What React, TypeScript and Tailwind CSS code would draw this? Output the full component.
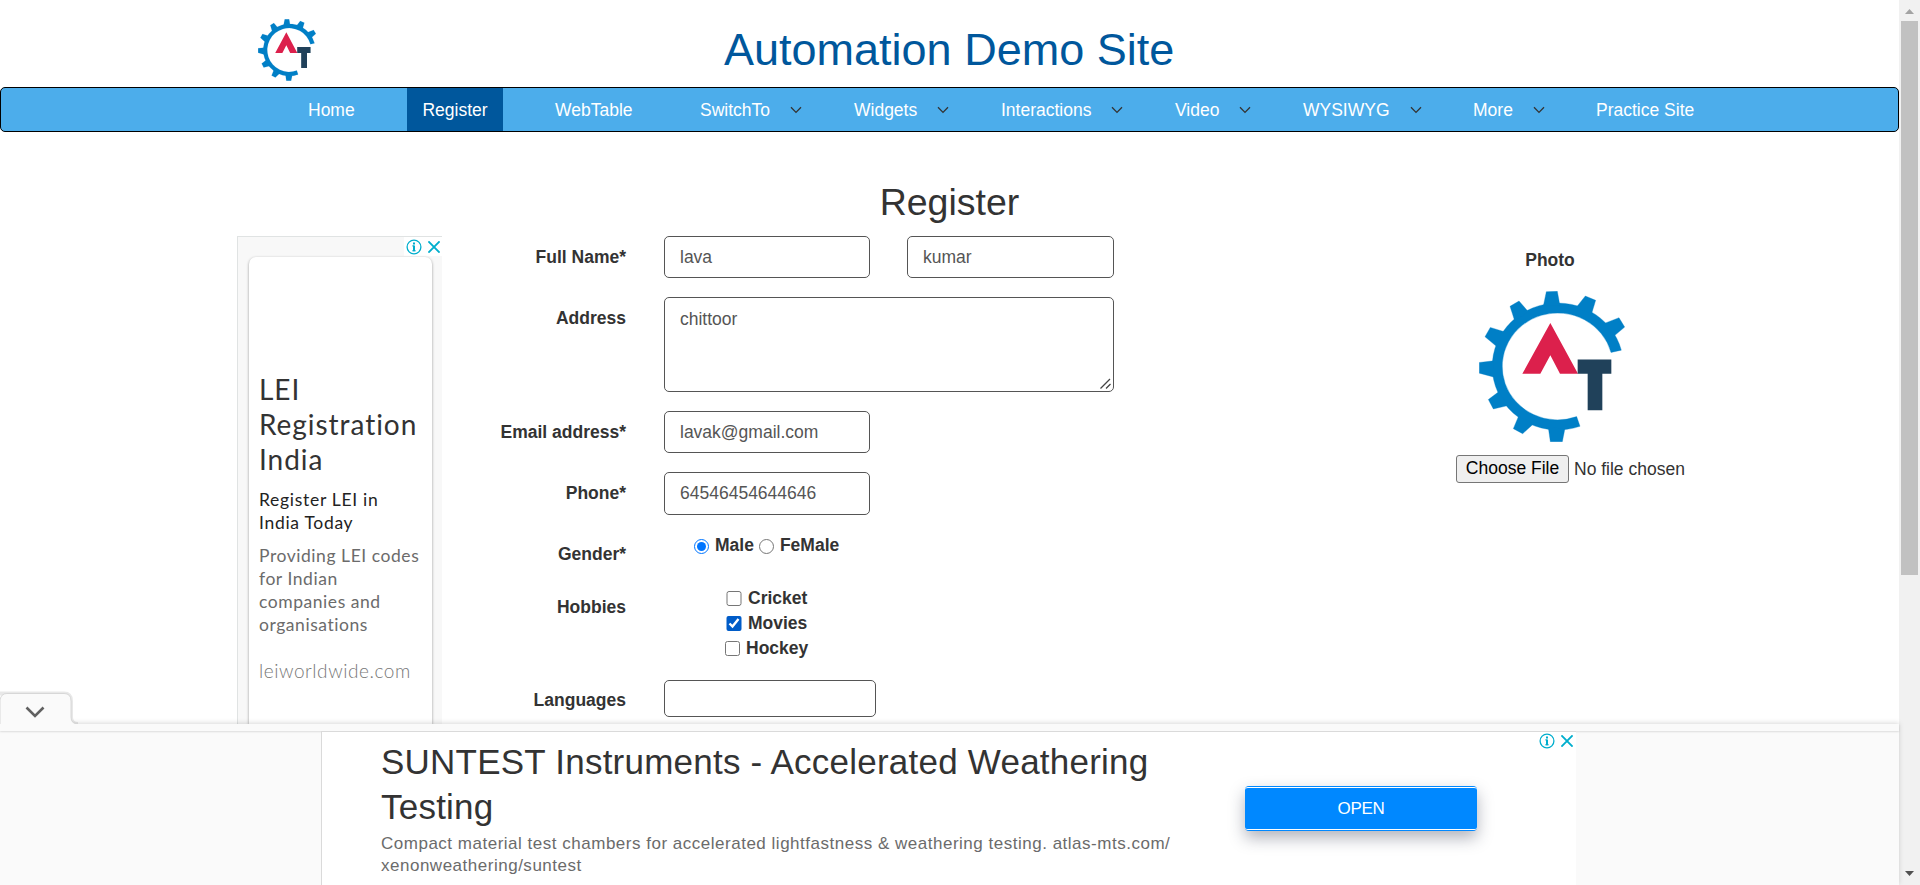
import type { ReactNode } from "react";

function Logo({ className }: { className: string }) {
  return (
    <svg className={className} viewBox="118 185 438 452" preserveAspectRatio="none">
      <g fill="#007fc6" stroke="#007fc6" strokeWidth="1">
        <path d="M545 362A197 190 0 1 0 421 590L411 561A166 160 0 1 1 514 369Z" />
        <path d="M311 230L320 187L353 186L361 230Z" />
        <path d="M409 235L437 200L468 213L456 252Z" />
        <path d="M494 282L538 265L555 293L523 320Z" />
        <path d="M266 247L238 215L211 231L225 274Z" />
        <path d="M194 307L152 294L136 322L172 352Z" />
        <path d="M162 394L119 399L119 431L164 443Z" />
        <path d="M178 486L146 510L161 538L205 528Z" />
        <path d="M237 559L221 597L249 612L281 583Z" />
        <path d="M326 594L332 636L368 636L376 596Z" />
      </g>
      <path d="M332 281L415 433H361L332 377L302 433H248Z" fill="#dc204c" />
      <path d="M414 390H515V433H488V542H444V433H414Z" fill="#20415a" />
    </svg>
  );
}

function AdInfoIcon() {
  return (
    <svg className="h-[16px] w-[16px]" viewBox="0 0 16 16" fill="none" stroke="#00aecd">
      <circle cx="8" cy="8" r="6.9" strokeWidth="1.3" />
      <path d="M8 3.4V5.4M8 6.4V12.2" strokeWidth="2" />
      <path d="M6.2 6.9H8M6.2 11.8H9.8" strokeWidth="0.9" />
    </svg>
  );
}

function AdCloseIcon() {
  return (
    <svg className="h-[12px] w-[12px]" viewBox="0 0 12 12" fill="none" stroke="#00aecd" strokeWidth="1.9">
      <path d="M0.4 0.4L11.6 11.6M11.6 0.4L0.4 11.6" />
    </svg>
  );
}

function NavItem({ label, width, menu }: { label: string; width: string; menu?: boolean }) {
  return (
    <a className={"flex shrink-0 items-center pt-px text-white " + width}>
      <span className="whitespace-nowrap">{label}</span>
      {menu && (
        <svg className="ml-[20px] h-[8px] w-[12px] shrink-0" viewBox="0 0 12 8" fill="none" stroke="#333" strokeWidth="1.3">
          <path d="M1 1.2L6 6.4L11 1.2" />
        </svg>
      )}
    </a>
  );
}

function Row({ label, className, children }: { label: string; className: string; children: ReactNode }) {
  return (
    <div className={"flex shrink-0 items-start " + className}>
      <label className="flex h-[42px] w-[183px] items-center justify-end font-bold">{label}</label>
      <div className="ml-[38px] flex">{children}</div>
    </div>
  );
}

const field = "rounded-[5px] border border-[#555] bg-white px-[15px] text-[17.5px] text-[#555] outline-none ";

function SideAd() {
  return (
    <aside className="mt-[28px] mr-px flex h-[488px] w-[205px] shrink-0 flex-col border-t border-l border-[#e0e3e3] bg-[#f8f8f8]">
      <div className="flex h-[20px] shrink-0 items-start justify-end">
        <div className="flex h-[19px] w-[38px] items-center justify-between bg-white pr-[2px] pl-[2px]">
          <AdInfoIcon />
          <AdCloseIcon />
        </div>
      </div>
      <div className="ml-[11px] flex h-[480px] w-[183px] flex-col rounded-t-[7px] bg-white pt-[115px] pl-[10px] font-['Lato',sans-serif] shadow-[0_1px_3px_rgba(0,0,0,0.4)]">
        <div className="text-[28px] leading-[35px] tracking-[0.95px] text-[#333]">
          LEI
          <br />
          Registration
          <br />
          India
        </div>
        <div className="mt-[11px] text-[17.5px] leading-[23px] tracking-[0.7px] whitespace-nowrap text-[#222]">
          Register LEI in
          <br />
          India Today
        </div>
        <div className="mt-[10px] text-[17.5px] leading-[23px] tracking-[0.55px] whitespace-nowrap text-[#6b6b6b]">
          Providing LEI codes
          <br />
          for Indian
          <br />
          companies and
          <br />
          organisations
        </div>
        <div className="mt-[23px] text-[19px] leading-[23px] font-light tracking-[0.55px] whitespace-nowrap text-[#777]">
          leiworldwide.com
        </div>
      </div>
    </aside>
  );
}

function BottomAd() {
  return (
    <section className="relative z-10 flex h-[161px] shrink-0 flex-col bg-[#fafafa] shadow-[0_-1px_5px_rgba(0,0,0,0.15)]">
      <svg className="absolute -top-[34px] left-0 h-[36px] w-[84px]" viewBox="0 0 84 36">
        <path
          d="M-2 3.5H64Q71 3.5 71 11V27Q71 34 78 34"
          fill="none"
          stroke="#000"
          strokeOpacity="0.09"
          strokeWidth="4"
        />
        <path
          d="M0 10Q1 3.5 7 3.5H64Q71 3.5 71 11V27Q71 34 78 34V36H0Z"
          fill="#fafafa"
          stroke="#d0d0d0"
          strokeWidth="0.8"
        />
        <path d="M0 34H84V36H0Z" fill="#fafafa" />
        <path d="M26.5 17.5L35 26L43.5 17.5" fill="none" stroke="#616161" strokeWidth="2.6" />
      </svg>
      <div className="h-[7px] shrink-0 shadow-[0_1px_2px_rgba(0,0,0,0.12)]" />
      <div className="ml-[321px] flex h-[154px] w-[1255px] border-t border-l border-[#dadada] bg-white">
        <div className="w-[864px] shrink-0 pt-[7px] pl-[59px]">
          <div className="text-[35px] leading-[45px] tracking-[0.23px] whitespace-nowrap text-[#333]">
            SUNTEST Instruments - Accelerated Weathering
            <br />
            Testing
          </div>
          <div className="mt-[4px] text-[17px] leading-[22px] tracking-[0.51px] whitespace-nowrap text-[#6b6b6b]">
            Compact material test chambers for accelerated lightfastness &amp; weathering testing. atlas-mts.com/
            <br />
            xenonweathering/suntest
          </div>
        </div>
        <div className="ml-[59px] pt-[54px]">
          <button className="flex h-[45px] w-[232px] flex-col rounded-[4px] bg-[#0088ff] py-px text-[17px] tracking-[-0.3px] text-white shadow-[0_7px_16px_rgba(40,45,70,0.36)]">
            <span className="flex h-[43px] w-full items-center justify-center rounded-[3px] border-y border-white">OPEN</span>
          </button>
        </div>
        <div className="flex h-[18px] flex-1 items-center justify-end gap-[6px] pr-[3px]">
          <AdInfoIcon />
          <AdCloseIcon />
        </div>
      </div>
    </section>
  );
}

function Scrollbar() {
  return (
    <div className="flex h-full w-[21px] shrink-0 flex-col bg-[#f1f1f1]">
      <svg className="h-[21px] w-[21px]" viewBox="0 0 21 21">
        <path d="M6 14L10.5 9L15 14Z" fill="#a3a3a3" />
      </svg>
      <div className="ml-[2px] h-[554px] w-[17px] bg-[#c1c1c1]" />
      <div className="flex-1" />
      <svg className="h-[21px] w-[21px]" viewBox="0 0 21 21">
        <path d="M6 7L10.5 12L15 7Z" fill="#505050" />
      </svg>
    </div>
  );
}

export default function App() {
  return (
    <div className="flex h-[885px] w-[1920px] overflow-hidden bg-white font-['Liberation_Sans',Arial,sans-serif] text-[17.5px] leading-[25px] text-[#333]">
      <div className="flex w-[1899px] shrink-0 flex-col">
        <header className="flex h-[87px] shrink-0">
          <Logo className="mt-[19px] ml-[258px] h-[62px] w-[58px]" />
          <h1 className="mt-[25px] ml-[408px] text-[45px] leading-[50px] whitespace-nowrap text-[#00579c]">Automation Demo Site</h1>
        </header>
        <nav className="flex h-[45px] shrink-0 rounded-[5px] border border-black bg-[#4cadeb] pl-[307px]">
          <NavItem label="Home" width="w-[99px]" />
          <a className="flex w-[96px] shrink-0 items-center justify-center bg-[#00579c] pt-px text-white">Register</a>
          <NavItem label="WebTable" width="ml-[52px] w-[145px]" />
          <NavItem label="SwitchTo" width="w-[154px]" menu />
          <NavItem label="Widgets" width="w-[147px]" menu />
          <NavItem label="Interactions" width="w-[174px]" menu />
          <NavItem label="Video" width="w-[128px]" menu />
          <NavItem label="WYSIWYG" width="w-[170px]" menu />
          <NavItem label="More" width="w-[123px]" menu />
          <NavItem label="Practice Site" width="w-[110px]" />
        </nav>
        <main className="flex h-[592px] shrink-0 flex-col overflow-hidden">
          <h2 className="mt-[49px] h-[27px] text-center text-[37.5px] leading-[42px]">Register</h2>
          <div className="flex h-[516px] pl-[237px]">
            <SideAd />
            <form className="mt-[28px] flex w-[1013px] flex-col">
              <Row label="Full Name*" className="h-[61px]">
                <input className={field + "h-[42px] w-[206px]"} defaultValue="lava" />
                <input className={field + "ml-[37px] h-[42px] w-[207px]"} defaultValue="kumar" />
              </Row>
              <Row label="Address" className="h-[114px]">
                <div className="relative h-[95px] w-[450px]">
                  <textarea className={field + "block h-[95px] w-[450px] resize-none pt-[9px] leading-[25px]"} defaultValue="chittoor" />
                  <svg className="absolute right-[3px] bottom-[3px] h-[11px] w-[11px]" viewBox="0 0 11 11" stroke="#444" strokeWidth="1.3">
                    <path d="M0.5 10.5L10 1M6 10.5L10.5 6" />
                  </svg>
                </div>
              </Row>
              <Row label="Email address*" className="h-[61px]">
                <input className={field + "h-[42px] w-[206px]"} defaultValue="lavak@gmail.com" />
              </Row>
              <Row label="Phone*" className="h-[61px]">
                <input className={field + "h-[43px] w-[206px]"} defaultValue="64546454644646" />
              </Row>
              <Row label="Gender*" className="h-[53px]">
                <div className="flex h-[25px] items-center pl-[30px] font-bold">
                  <input type="radio" name="gender" defaultChecked className="mt-px mr-[6px] h-[15px] w-[15px]" />
                  Male
                  <input type="radio" name="gender" className="mt-px mr-[6px] ml-[5px] h-[15px] w-[15px]" />
                  FeMale
                </div>
              </Row>
              <Row label="Hobbies" className="h-[93px]">
                <div className="flex flex-col font-bold">
                  <label className="flex h-[25px] items-center pl-[62px]">
                    <input type="checkbox" className="mr-[6px] h-[15px] w-[16px]" />
                    Cricket
                  </label>
                  <label className="flex h-[25px] items-center pl-[62px]">
                    <input type="checkbox" defaultChecked className="mr-[6px] h-[15px] w-[16px] accent-[#005cc8]" />
                    Movies
                  </label>
                  <label className="flex h-[25px] items-center pl-[61px]">
                    <input type="checkbox" className="mr-[6px] h-[15px] w-[15px]" />
                    Hockey
                  </label>
                </div>
              </Row>
              <Row label="Languages" className="h-[45px]">
                <div className={field + "mt-px h-[37px] w-[212px]"} />
              </Row>
            </form>
            <div className="mt-[40px] flex w-[240px] flex-col">
              <div className="h-[43px] w-[188px] text-center font-bold">Photo</div>
              <Logo className="ml-[23px] h-[151px] w-[146px]" />
              <div className="mt-[13px] flex h-[28px] items-center">
                <button className="flex h-[28px] w-[113px] items-center justify-center rounded-[3px] border border-[#767676] bg-[#efefef] pb-[2px] text-black">
                  Choose File
                </button>
                <span className="ml-[5px]">No file chosen</span>
              </div>
            </div>
          </div>
        </main>
        <BottomAd />
      </div>
      <Scrollbar />
    </div>
  );
}
